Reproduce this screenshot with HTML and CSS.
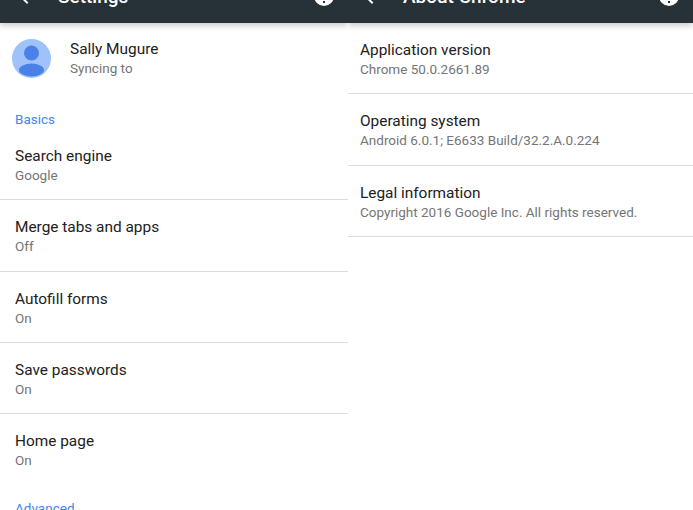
FILE: index.html
```html
<!DOCTYPE html>
<html lang="en">
<head>
<meta charset="utf-8">
<title>Settings and About Chrome</title>
<link rel="stylesheet" href="styles.css">
</head>
<body>
<main class="screen">
  <section class="pane pane-left">
    <header class="appbar">
      <div class="toolbar">
        <svg class="back" viewBox="0 0 24 24" width="24" height="24"><path d="M20 11H7.8l5.6-5.6L12 4l-8 8 8 8 1.4-1.4L7.8 13H20z"/></svg>
        <h1 class="title">Settings</h1>
        <svg class="help" viewBox="0 0 24 24" width="24" height="24"><path d="M12 2a10 10 0 1 0 0 20 10 10 0 0 0 0-20zm1 17h-2v-2h2zm2.100-7.700-.9.900c-.7.700-1.200 1.300-1.200 2.800h-2v-.5c0-1.100.5-2.100 1.200-2.800l1.200-1.300c.4-.3.600-.8.600-1.400a2 2 0 0 0-4 0H8a4 4 0 0 1 8 0c0 .9-.4 1.700-.9 2.300z"/></svg>
      </div>
    </header>
    <div class="profile">
      <svg class="avatar" viewBox="0 0 39 39" width="39" height="39">
        <circle cx="19.500" cy="19.500" r="19.500" fill="#9fc2fb"/>
        <circle cx="19.500" cy="14" r="7.500" fill="#4a80e8"/>
        <ellipse cx="19.500" cy="31" rx="12.500" ry="6.500" fill="#4a80e8"/>
      </svg>
      <div class="profile-text">
        <div class="item-title">Sally Mugure</div>
        <div class="item-sub">Syncing to</div>
      </div>
    </div>
    <h2 class="section section-basics">Basics</h2>
    <div class="item"><div class="item-title">Search engine</div><div class="item-sub">Google</div></div>
    <div class="item"><div class="item-title">Merge tabs and apps</div><div class="item-sub">Off</div></div>
    <div class="item"><div class="item-title">Autofill forms</div><div class="item-sub">On</div></div>
    <div class="item"><div class="item-title">Save passwords</div><div class="item-sub">On</div></div>
    <div class="item item-last"><div class="item-title">Home page</div><div class="item-sub">On</div></div>
    <h2 class="section section-advanced">Advanced</h2>
  </section>
  <section class="pane pane-right">
    <header class="appbar">
      <div class="toolbar toolbar-right">
        <svg class="back" viewBox="0 0 24 24" width="24" height="24"><path d="M20 11H7.8l5.6-5.6L12 4l-8 8 8 8 1.4-1.4L7.8 13H20z"/></svg>
        <h1 class="title">About Chrome</h1>
        <svg class="help" viewBox="0 0 24 24" width="24" height="24"><path d="M12 2a10 10 0 1 0 0 20 10 10 0 0 0 0-20zm1 17h-2v-2h2zm2.100-7.700-.9.900c-.7.700-1.200 1.300-1.200 2.800h-2v-.5c0-1.100.5-2.100 1.200-2.800l1.200-1.300c.4-.3.600-.8.600-1.400a2 2 0 0 0-4 0H8a4 4 0 0 1 8 0c0 .9-.4 1.700-.9 2.300z"/></svg>
      </div>
    </header>
    <div class="item item-about item-first"><div class="item-title">Application version</div><div class="item-sub">Chrome 50.0.2661.89</div></div>
    <div class="item item-about"><div class="item-title">Operating system</div><div class="item-sub">Android 6.0.1; E6633 Build/32.2.A.0.224</div></div>
    <div class="item item-about"><div class="item-title">Legal information</div><div class="item-sub">Copyright 2016 Google Inc. All rights reserved.</div></div>
  </section>
</main>
</body>
</html>
```
FILE: styles.css
```css
* { box-sizing: border-box; }
html, body { margin: 0; padding: 0; background: #fff; }
body { font-family: Roboto, "Liberation Sans", sans-serif; }
.screen { display: flex; width: 693px; height: 510px; overflow: hidden; }
.pane { height: 510px; overflow: hidden; }
.pane-left { width: 348px; }
.pane-right { width: 345px; }
.appbar {
  height: 23px;
  background: #263238;
  display: flex;
  align-items: flex-end;
  overflow: hidden;
  box-shadow: 0 3px 6px rgba(0, 0, 0, .2);
  position: relative;
}
.toolbar {
  flex: none;
  width: 100%;
  height: 56px;
  display: flex;
  align-items: center;
  padding: 0 12px 0 15px;
  color: #fff;
  margin-bottom: -1px;
}
.toolbar-right { padding-left: 12px; }
.back { fill: #fff; flex: none; }
.title {
  margin: 0 0 0 19px;
  font-size: 19px;
  font-weight: 500;
  flex: 1;
}
.help { fill: #fff; flex: none; }
.profile { display: flex; align-items: center; height: 70px; padding-left: 12px; }
.profile-text { margin-left: 19px; padding-top: 1px; }
.avatar { flex: none; }
.item-title { font-size: 15.4px; line-height: 20px; color: #212121; }
.item-sub { font-size: 13.5px; line-height: 20px; color: #757575; margin-top: -1px; }
.section { margin: 0; font-size: 13.500px; font-weight: 400; line-height: 16px; color: #4285f4; padding-left: 15px; }
.section-basics { padding-top: 18px; height: 36px; }
.section-advanced { padding-top: 15px; }
.item { height: 71.25px; padding: 17px 15px 0; border-bottom: 1px solid #dcdcdc; }
.item-last { border-bottom: 0; }
.item-about { padding-left: 12px; padding-right: 12px; }
.item-first { padding-top: 17px; }
```
